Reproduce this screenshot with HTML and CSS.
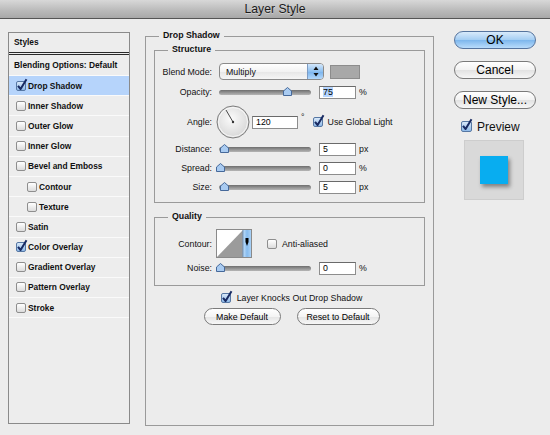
FILE: index.html
```html
<!DOCTYPE html>
<html lang="en">
<head>
    <meta charset="UTF-8">
    <title>Layer Style</title>
    <link rel="stylesheet" href="styles.css">
</head>
<body>
<div class="titlebar">Layer Style</div>
<div class="content">
    <div class="styles-list">
        <div class="list-head">Styles</div>
        <div class="list-blend">Blending Options: Default</div>
        <div class="list-item selected"><span class="cb checked"><svg viewBox="0 0 10 10"><path d="M2 4.8 L4.6 8 L10.5 -1.8"/></svg></span>Drop Shadow</div>
        <div class="list-item"><span class="cb"></span>Inner Shadow</div>
        <div class="list-item"><span class="cb"></span>Outer Glow</div>
        <div class="list-item"><span class="cb"></span>Inner Glow</div>
        <div class="list-item"><span class="cb"></span>Bevel and Emboss</div>
        <div class="list-item sub"><span class="cb"></span>Contour</div>
        <div class="list-item sub"><span class="cb"></span>Texture</div>
        <div class="list-item"><span class="cb"></span>Satin</div>
        <div class="list-item"><span class="cb checked"><svg viewBox="0 0 10 10"><path d="M2 4.8 L4.6 8 L10.5 -1.8"/></svg></span>Color Overlay</div>
        <div class="list-item"><span class="cb"></span>Gradient Overlay</div>
        <div class="list-item"><span class="cb"></span>Pattern Overlay</div>
        <div class="list-item"><span class="cb"></span>Stroke</div>
    </div>

    <div class="options">
        <span class="legend">Drop Shadow</span>

        <div class="group structure">
            <span class="legend">Structure</span>
            <div class="row blend-row">
                <span class="label">Blend Mode:</span>
                <div class="select">
                    <span class="select-text">Multiply</span>
                    <span class="stepper">
                        <svg width="6" height="11" viewBox="0 0 6 11"><path d="M3 0.5 L5.5 4 H0.5 Z M0.5 7 H5.5 L3 10.5 Z"/></svg>
                    </span>
                </div>
                <span class="swatch"></span>
            </div>
            <div class="row">
                <span class="label">Opacity:</span>
                <div class="slider">
                    <svg class="thumb" style="left: 64px" viewBox="0 0 9 9"><path d="M4.5 0.5 L8.5 4 V8.5 H0.5 V4 Z"/></svg>
                </div>
                <span class="field"><span class="sel">75</span></span>
                <span class="unit">%</span>
            </div>
            <div class="row angle-row">
                <span class="label">Angle:</span>
                <svg class="dial" width="34" height="34" viewBox="0 0 34 34">
                    <defs>
                        <radialGradient id="dialFill" cx="0.45" cy="0.4" r="0.65">
                            <stop offset="0" stop-color="#fbfbfb"/>
                            <stop offset="1" stop-color="#d4d4d4"/>
                        </radialGradient>
                    </defs>
                    <circle cx="17" cy="17" r="16" fill="url(#dialFill)" stroke="#7c7c7c"/>
                    <circle cx="17" cy="17" r="14.5" fill="none" stroke="#ffffff" stroke-opacity="0.7"/>
                    <line x1="17" y1="17" x2="10" y2="5" stroke="#4a4a4a" stroke-width="1"/>
                    <circle cx="17" cy="17" r="1.2" fill="#333"/>
                </svg>
                <span class="field wide">120</span>
                <span class="deg">°</span>
                <span class="cb checked global"><svg viewBox="0 0 10 10"><path d="M2 4.8 L4.6 8 L10.5 -1.8"/></svg></span>
                <span class="cb-text">Use Global Light</span>
            </div>
            <div class="row first-slider">
                <span class="label">Distance:</span>
                <div class="slider">
                    <svg class="thumb" style="left: 1px" viewBox="0 0 9 9"><path d="M4.5 0.5 L8.5 4 V8.5 H0.5 V4 Z"/></svg>
                </div>
                <span class="field">5</span>
                <span class="unit">px</span>
            </div>
            <div class="row">
                <span class="label">Spread:</span>
                <div class="slider">
                    <svg class="thumb" style="left: -3px" viewBox="0 0 9 9"><path d="M4.5 0.5 L8.5 4 V8.5 H0.5 V4 Z"/></svg>
                </div>
                <span class="field">0</span>
                <span class="unit">%</span>
            </div>
            <div class="row">
                <span class="label">Size:</span>
                <div class="slider">
                    <svg class="thumb" style="left: 1px" viewBox="0 0 9 9"><path d="M4.5 0.5 L8.5 4 V8.5 H0.5 V4 Z"/></svg>
                </div>
                <span class="field">5</span>
                <span class="unit">px</span>
            </div>
        </div>

        <div class="group quality">
            <span class="legend">Quality</span>
            <div class="row contour-row">
                <span class="label">Contour:</span>
                <svg class="contour" width="36" height="29" viewBox="0 0 36 29">
                    <defs>
                        <linearGradient id="stripFill" x1="0" y1="0" x2="1" y2="0">
                            <stop offset="0" stop-color="#c4e0fa"/>
                            <stop offset="0.5" stop-color="#86bbee"/>
                            <stop offset="1" stop-color="#a9d1f6"/>
                        </linearGradient>
                    </defs>
                    <rect x="0.5" y="0.5" width="35" height="28" fill="#ffffff" stroke="#8a8a8a"/>
                    <polygon points="1,28 27,1 27,28" fill="#9b9b9b"/>
                    <rect x="27" y="1" width="8" height="27" fill="url(#stripFill)"/>
                    <line x1="27" y1="1" x2="27" y2="28" stroke="#6b8fb8"/>
                    <polygon points="29.5,9 32.5,9 32.5,13 31,17 29.5,13" fill="#000"/>
                </svg>
                <span class="cb anti"></span>
                <span class="cb-text">Anti-aliased</span>
            </div>
            <div class="row">
                <span class="label">Noise:</span>
                <div class="slider">
                    <svg class="thumb" style="left: -3px" viewBox="0 0 9 9"><path d="M4.5 0.5 L8.5 4 V8.5 H0.5 V4 Z"/></svg>
                </div>
                <span class="field">0</span>
                <span class="unit">%</span>
            </div>
        </div>

        <div class="knock-row">
            <span class="cb checked"><svg viewBox="0 0 10 10"><path d="M2 4.8 L4.6 8 L10.5 -1.8"/></svg></span>
            <span class="cb-text">Layer Knocks Out Drop Shadow</span>
        </div>
        <div class="default-row">
            <button class="push make">Make Default</button>
            <button class="push reset">Reset to Default</button>
        </div>
    </div>

    <div class="actions">
        <button class="btn ok">OK</button>
        <button class="btn">Cancel</button>
        <button class="btn">New Style...</button>
        <div class="preview-row">
            <span class="cb checked big"><svg viewBox="0 0 10 10"><path d="M2 4.8 L4.6 8 L10.5 -1.8"/></svg></span>
            <span>Preview</span>
        </div>
        <div class="preview">
            <span class="sample"></span>
        </div>
    </div>
</div>
</body>
</html>
```

FILE: styles.css
```css
* {
    margin: 0;
    padding: 0;
    box-sizing: border-box;
}

body {
    width: 550px;
    height: 435px;
    overflow: hidden;
    background: #ececec;
    font-family: 'Liberation Sans', Arial, sans-serif;
    font-size: 8.8px;
    color: #111;
}

.titlebar {
    height: 19px;
    line-height: 18px;
    text-align: center;
    font-size: 12.2px;
    color: #1a1a1a;
    text-shadow: 0 1px 0 rgba(255, 255, 255, 0.4);
    background: linear-gradient(#d8d8d8, #b9b9b9 60%, #a8a8a8);
    border-bottom: 1px solid #555;
}

.content {
    display: flex;
    align-items: flex-start;
    padding: 13px 0 0 8px;
}

/* left list */

.styles-list {
    width: 122px;
    height: 392px;
    border: 1px solid #8a8a8a;
    background: #ededed;
    font-size: 8.4px;
    font-weight: bold;
}

.list-head {
    height: 22px;
    line-height: 19px;
    padding-left: 5px;
    border-bottom: 3px double #2a2a2a;
}

.list-blend {
    height: 21px;
    line-height: 20px;
    padding-left: 5px;
    border-bottom: 1px solid #fafafa;
}

.list-item {
    display: flex;
    align-items: center;
    height: 20.2px;
    padding-left: 7px;
    border-bottom: 1px solid #fafafa;
}

.list-item.sub {
    padding-left: 18px;
}

.list-item.selected {
    background: #b6d4fb;
}

.list-item .cb {
    margin-right: 2px;
}

/* checkboxes */

.cb {
    display: inline-block;
    flex: none;
    width: 10px;
    height: 10px;
    border: 1px solid #8e8e8e;
    border-radius: 2px;
    background: linear-gradient(#ffffff, #dcdcdc);
}

.cb.checked {
    border-color: #5677a3;
    background: linear-gradient(#d8e8f9, #8fbae9);
}

.cb svg {
    display: block;
    width: 10px;
    height: 10px;
    margin: -1px 0 0 -1px;
    overflow: visible;
}

.cb svg path {
    fill: none;
    stroke: #182a62;
    stroke-width: 2;
    stroke-linejoin: round;
}

.cb-text {
    margin-left: 5px;
}

/* middle panel */

.options {
    position: relative;
    width: 289px;
    height: 390px;
    margin: 4px 0 0 15px;
    border: 1px solid #9a9a9a;
}

.legend {
    position: absolute;
    top: -7px;
    left: 13px;
    padding: 0 4px;
    line-height: 11px;
    font-weight: bold;
    background: #ececec;
}

.group {
    position: relative;
    margin: 0 8px;
    border: 1px solid #9a9a9a;
}

.structure {
    height: 153px;
    margin-top: 13px;
}

.quality {
    height: 69px;
    margin-top: 14px;
}

.row {
    display: flex;
    align-items: center;
    height: 14px;
    margin-top: 5px;
}

.label {
    width: 57px;
    margin-right: 7px;
    text-align: right;
}

.blend-row {
    height: 17px;
    margin-top: 12px;
}

.select {
    display: flex;
    align-items: center;
    width: 105px;
    height: 17px;
    border: 1px solid #8a8a8a;
    border-radius: 4px;
    background: linear-gradient(#ffffff, #f3f3f3 50%, #e6e6e6 51%, #f6f6f6);
    overflow: hidden;
}

.select-text {
    flex: 1;
    padding-left: 6px;
}

.stepper {
    display: flex;
    align-items: center;
    justify-content: center;
    width: 16px;
    height: 100%;
    border-left: 1px solid #7d9cc4;
    background: linear-gradient(#d3e7fb, #8ec0f0 50%, #79b2ec 51%, #b3d8fb);
}

.stepper svg path {
    fill: #111;
}

.swatch {
    width: 30px;
    height: 14px;
    margin-left: 6px;
    border: 1px solid #8c8c8c;
    background: #a8a8a8;
}

.slider {
    position: relative;
    width: 92px;
    height: 5px;
    margin-right: 8px;
    border-radius: 3px;
    background: linear-gradient(#6e6e6e, #9a9a9a 60%, #b5b5b5);
}

.thumb {
    position: absolute;
    top: -3px;
    width: 9px;
    height: 9px;
}

.thumb path {
    fill: #a9cbf1;
    stroke: #46699a;
    stroke-width: 1;
}

.field {
    width: 37px;
    height: 13px;
    padding-left: 3px;
    line-height: 11px;
    border: 1px solid #8d8d8d;
    border-top-color: #6a6a6a;
    background: #fff;
    color: #000;
}

.field.wide {
    width: 46px;
}

.sel {
    background: #b5d5ff;
}

.unit {
    margin-left: 3px;
}

.angle-row {
    height: 34px;
    margin-top: 6px;
}

.dial {
    flex: none;
    margin: 0 2px 0 -3px;
}

.deg {
    align-self: flex-start;
    margin: 7px 0 0 3px;
}

.global {
    margin-left: 8px;
}

.first-slider {
    margin-top: 3px;
}

.contour-row {
    height: 29px;
    margin-top: 11px;
}

.contour {
    flex: none;
    margin-left: -3px;
}

.anti {
    margin-left: 15px;
}

.quality .row + .row {
    margin-top: 3px;
}

.knock-row {
    display: flex;
    align-items: center;
    justify-content: center;
    height: 11px;
    margin-top: 6px;
    padding-left: 4px;
}

.knock-row .cb-text {
    margin-left: 6px;
}

.default-row {
    display: flex;
    justify-content: center;
    gap: 16px;
    margin-top: 5px;
    padding-left: 4px;
}

.push {
    height: 17px;
    border: 1px solid #7b7b7b;
    border-radius: 9px;
    background: linear-gradient(#ffffff, #f4f4f4 50%, #e4e4e4 51%, #f7f7f7);
    font-family: inherit;
    font-size: 8.8px;
    color: #000;
}

.make {
    width: 77px;
}

.reset {
    width: 83px;
}

/* right column */

.actions {
    width: 82px;
    margin: -1px 0 0 20px;
}

.btn {
    display: block;
    width: 82px;
    height: 18px;
    margin-bottom: 12px;
    border: 1px solid #7a7a7a;
    border-radius: 9px;
    background: linear-gradient(#ffffff, #f2f2f2 50%, #e2e2e2 51%, #f6f6f6);
    font-family: inherit;
    font-size: 12px;
    color: #000;
}

.btn.ok {
    border-color: #56749e;
    background: linear-gradient(#d8eafb, #a3cdf3 50%, #7db6ec 51%, #b9dcfb);
}

.preview-row {
    display: flex;
    align-items: center;
    height: 11px;
    padding-left: 7px;
    font-size: 12px;
}

.preview-row span + span {
    margin-left: 5px;
}

.cb.big {
    width: 11px;
    height: 11px;
}

.preview {
    display: flex;
    align-items: center;
    justify-content: center;
    width: 60px;
    height: 60px;
    margin: 8px 0 0 10px;
    border: 1px solid #cdcdcd;
    background: #d9d9d9;
}

.sample {
    width: 28px;
    height: 28px;
    background: #08adf0;
    box-shadow: 2px 3px 4px rgba(0, 0, 0, 0.4);
}
```
